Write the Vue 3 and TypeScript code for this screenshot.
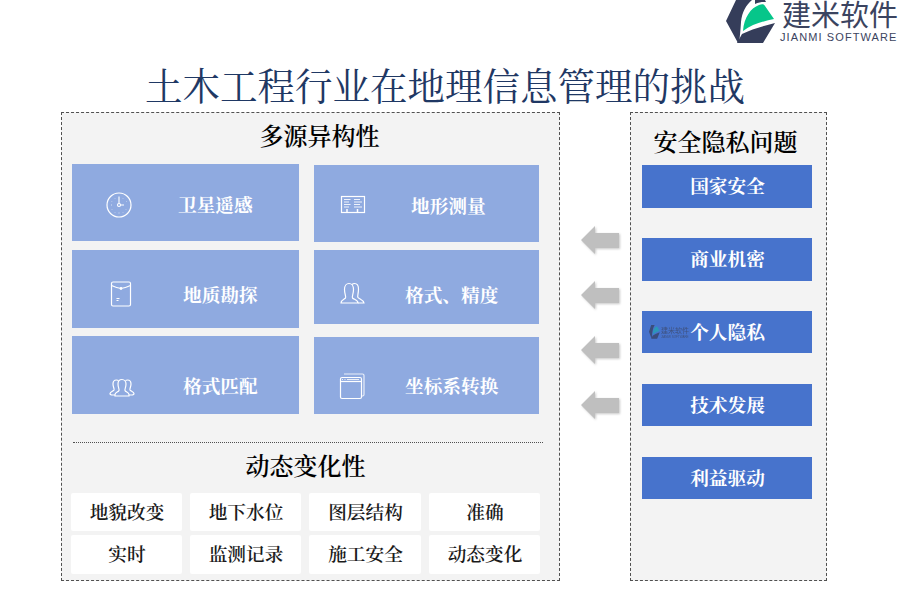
<script setup lang="ts">
const dyn: string[] = ['地貌改变', '地下水位', '图层结构', '准确', '实时', '监测记录', '施工安全', '动态变化']
const risks: string[] = ['国家安全', '商业机密', '个人隐私', '技术发展', '利益驱动']
const arrows: number[] = [1, 2, 3, 4]
</script>

<template>
  <div class="page">
    <header class="head">
      <div class="logo">
        <svg class="mark" width="50" height="44" viewBox="0 0 50 44">
          <path d="M10 0H26C20 5 16 12 15 22C14.500 30 14 36 13 43H12L0 21Z" fill="#353d5a" />
          <path d="M17 31C18 17 25 8 33 5C36 4 38 4 39 6L48 19C38 21 26 24 17 31Z" fill="#06c68a" />
          <path d="M49 23L37 43H11L16 34C26 29 38 26 49 23Z" fill="#353d5a" />
          <path d="M29 0H39L40 2C36 2 33 2 29 4Z" fill="#353d5a" />
        </svg>
        <div class="logo-text">
          <div class="logo-cn">建米软件</div>
          <div class="logo-en">JIANMI SOFTWARE</div>
        </div>
      </div>
    </header>

    <h1 class="title">土木工程行业在地理信息管理的挑战</h1>

    <main class="main">
      <section class="left">
        <h2 class="h-left h-first">多源异构性</h2>
        <div class="cards">
          <div class="col col-a">
            <div class="card c1">
              <svg class="ic" width="30" height="30" viewBox="0 0 30 30" fill="none" stroke="#fff">
                <circle cx="15" cy="15" r="12" stroke-width="1.200" />
                <path d="M15 13.500V6.500M16.500 15H20" stroke-width="1.100" />
                <circle cx="15" cy="15" r="1.500" stroke-width="1.100" />
                <path d="M15 22.500V23.500M7 15H8M22.500 11V11.500M7.800 11V11.500M22 19V19.500M8 19V19.500M11 8V8.500M19 8V8.500M11 22V22.500M19 22V22.500" stroke-width=".8" opacity=".8" />
              </svg>
              <span>卫星遥感</span>
            </div>
            <div class="card c3">
              <svg class="ic" width="30" height="30" viewBox="0 0 30 30" fill="none" stroke="#fff" stroke-width="1.200">
                <rect x="5.500" y="3" width="19" height="24" rx="1.500" />
                <path d="M5.500 6.500C9 8 12 9 15 9.500C18 9 21 8 24.500 6.500" />
                <circle cx="15" cy="9.500" r=".8" />
                <path d="M10.500 19.500H13.500M10.500 21.500H12.500" />
              </svg>
              <span>地质勘探</span>
            </div>
            <div class="card c5">
              <svg class="ic" width="30" height="30" viewBox="0 0 30 30" fill="none" stroke="#fff" stroke-width="1.200">
                <path d="M8 23H22V21.500C22 19.500 18.500 19 18 17.500C17.500 16.500 19 14.500 19 11C19 8.500 17.500 6.500 15 6.500C12.500 6.500 11 8.500 11 11C11 14.500 12.500 16.500 12 17.500C11.500 19 8 19.500 8 21.500Z" />
                <path d="M11.500 7.500C10.800 7 10 7 9.500 7C7.500 7 6 8.500 6 11C6 14 7.500 15.500 7 17C6.500 18 3 19 3 20.500C3 21.500 4 22 5.500 22H8" />
                <path d="M18.500 7.500C19.200 7 20 7 20.500 7C22.500 7 24 8.500 24 11C24 14 22.500 15.500 23 17C23.500 18 27 19 27 20.500C27 21.500 26 22 24.500 22H22" />
              </svg>
              <span>格式匹配</span>
            </div>
          </div>
          <div class="col col-b">
            <div class="card c2">
              <svg class="ic" width="30" height="30" viewBox="0 0 30 30" fill="none" stroke="#fff" stroke-width="1.100">
                <rect x="3.500" y="6.500" width="23" height="16" stroke-width="1.200" />
                <path d="M6 9.500H12.500M6 12H11M6 14.500H12.500M6 17H11M16 9.500H22M16 12H24M16 14.500H22M16 17H24" stroke-opacity=".85" />
                <path d="M9 19V22M19.500 19V22" stroke-width="1.500" />
              </svg>
              <span>地形测量</span>
            </div>
            <div class="card c4">
              <svg class="ic" width="30" height="30" viewBox="0 0 30 30" fill="none" stroke="#fff" stroke-width="1.200">
                <path d="M4 25H21C21 22 17 21.500 15.500 20C14.500 19 16.500 16.500 16.500 11.500C16.500 8 14.500 5.500 12 5.500C9.500 5.500 7.500 8 7.500 11.500C7.500 16.500 9.500 19 8.500 20C7 21.500 4 22 4 25Z" />
                <path d="M15 6.500C15.800 5.800 16.500 5.500 17.500 5.500C20 5.500 21.500 8 21.500 11C21.500 16 20 18 21 19.500C22 21 26.500 22 27 25H21" />
              </svg>
              <span>格式、精度</span>
            </div>
            <div class="card c6">
              <svg class="ic" width="30" height="30" viewBox="0 0 30 30" fill="none" stroke="#fff" stroke-width="1.200">
                <rect x="3.500" y="6.500" width="21" height="21" rx="1.500" />
                <path d="M3.500 10.500H24.500" />
                <path d="M7 3H25.500C26.500 3 27 3.500 27 4.500V23.500C27 24.500 26.500 25 25.500 25H24.500" stroke-opacity=".8" />
                <path d="M5 8.500H6M7.500 8.500H8.500M10 8.500H22" stroke-opacity=".8" />
              </svg>
              <span>坐标系转换</span>
            </div>
          </div>
        </div>
        <div class="dots"></div>
        <h2 class="h-left h-second">动态变化性</h2>
        <div class="tags">
          <div v-for="d in dyn" :key="d" class="tag">{{ d }}</div>
        </div>
      </section>

      <div class="arrows">
        <svg v-for="a in arrows" :key="a" class="arrow" width="42" height="32" viewBox="0 0 42 32">
          <path d="M1 15L15 1V8H39V23H15V29Z" fill="#bfbfbf" />
        </svg>
      </div>

      <aside class="right">
        <h2 class="h-right">安全隐私问题</h2>
        <div v-for="r in risks" :key="r" class="risk">
          <div v-if="r === '个人隐私'" class="wm">
            <svg width="11" height="14" viewBox="0 0 50 44" preserveAspectRatio="none">
              <path d="M10 0H26C18 8 15 20 13 43H12L0 21Z" fill="#353d5a" />
              <path d="M17 31C18 17 25 8 33 5L39 6L48 19C38 21 26 24 17 31Z" fill="#20a8b0" />
              <path d="M49 23L37 43H11L16 34C26 29 38 26 49 23Z" fill="#353d5a" />
            </svg>
            <div class="wm-text">
              <div class="wm-cn">建米软件</div>
              <div class="wm-en">JIANMI SOFTWARE</div>
            </div>
          </div>
          {{ r }}
        </div>
      </aside>
    </main>
  </div>
</template>

<style>
html, body { margin: 0; background: #fff; }
</style>

<style scoped>
.page {
  width: 900px;
  height: 600px;
  overflow: hidden;
  display: flex;
  flex-direction: column;
  font-family: "Noto Serif CJK SC", "Liberation Serif", "Noto Sans CJK SC", serif;
  color: #000;
}
.head {
  height: 60px;
  flex: none;
  display: flex;
  justify-content: flex-end;
}
.logo {
  display: flex;
  align-items: flex-start;
  height: 44px;
}
.mark { margin-right: 4px; }
.logo-text { width: 120px; }
.logo-cn {
  font-family: "Liberation Sans", "Noto Sans CJK SC", sans-serif;
  font-size: 29px;
  line-height: 28px;
  padding: 2px 0 0 2px;
  color: #3b4460;
}
.logo-en {
  font-family: "Liberation Sans", sans-serif;
  font-size: 11px;
  line-height: 13px;
  margin-top: 1px;
  letter-spacing: 1.100px;
  color: #3b4460;
  white-space: nowrap;
}
.title {
  margin: 0;
  height: 52px;
  flex: none;
  padding-right: 10px;
  text-align: center;
  font-size: 37.500px;
  line-height: 48px;
  font-weight: 400;
  color: #1f3864;
  white-space: nowrap;
}
.main {
  display: flex;
  padding-left: 61px;
  height: 469px;
}
.left {
  box-sizing: border-box;
  width: 499px;
  height: 469px;
  border: 1px dashed #505050;
  background: #f3f3f3;
}
.h-left {
  margin: 0;
  height: 48px;
  font-size: 24px;
  line-height: 44px;
  font-weight: 600;
  text-align: center;
}
.h-first { margin-bottom: 3px; padding-left: 18px; }
.h-second { padding-right: 10px; }
.cards {
  display: flex;
  gap: 15px;
  margin-left: 10px;
}
.col { display: flex; flex-direction: column; }
.col-a { width: 227px; gap: 9px; }
.col-b { width: 225px; margin-top: 1px; gap: 8px; }
.card {
  display: flex;
  align-items: center;
  background: #8faae0;
  color: #fff;
  font-size: 18.670px;
  font-weight: 700;
  white-space: nowrap;
}
.card span { display: block; }
.c1 { height: 77px; }
.c1 .ic { margin-left: 32px; margin-top: 5px; }
.c1 span { margin-left: 44px; margin-top: 3px; }
.c2 { height: 77px; }
.c2 .ic { margin-left: 24px; margin-top: 3px; }
.c2 span { margin-left: 43px; margin-top: 3px; }
.c3 { height: 78px; }
.c3 .ic { margin-left: 34px; margin-top: 9px; }
.c3 span { margin-left: 47px; margin-top: 10px; }
.c4 { height: 74px; }
.c4 .ic { margin-left: 23px; margin-top: 12px; }
.c4 span { margin-left: 38px; margin-top: 14px; }
.c5 { height: 78px; margin-top: -1px; }
.c5 .ic { margin-left: 35px; margin-top: 26px; }
.c5 span { margin-left: 46px; margin-top: 20px; }
.c6 { height: 77px; margin-top: 5px; }
.c6 .ic { margin-left: 23px; margin-top: 21px; }
.c6 span { margin-left: 38px; margin-top: 19px; }
.dots {
  margin: 28px 0 0 11px;
  width: 470px;
  border-top: 1px dotted #505050;
}
.tags {
  display: grid;
  grid-template-columns: 111px 111px 112px 111px;
  grid-template-rows: 38px 39px;
  column-gap: 8px;
  row-gap: 4px;
  margin: 2px 0 0 9px;
}
.tag {
  display: flex;
  align-items: center;
  justify-content: center;
  padding: 0 0 3px 1px;
  box-sizing: border-box;
  background: #fff;
  border-radius: 2px;
  font-size: 18.670px;
  font-weight: 600;
  color: #1a1a1a;
}
.arrows {
  width: 70px;
  flex: none;
  display: flex;
  flex-direction: column;
  gap: 23px;
  padding: 113px 0 0 20px;
  box-sizing: border-box;
}
.arrow {
  display: block;
  filter: drop-shadow(1px 1px 1px rgba(0, 0, 0, .22));
}
.right {
  box-sizing: border-box;
  width: 197px;
  height: 469px;
  border: 1px dashed #505050;
  background: #f3f3f3;
  padding: 8px 0 0 11px;
}
.h-right {
  margin: 0 0 2px;
  height: 42px;
  line-height: 40px;
  width: 167px;
  font-size: 24px;
  font-weight: 600;
  text-align: center;
  white-space: nowrap;
}
.risk {
  position: relative;
  box-sizing: border-box;
  width: 170px;
  height: 43px;
  margin-bottom: 30px;
  padding: 0 0 4px 1px;
  display: flex;
  align-items: center;
  justify-content: center;
  background: #4773cc;
  color: #fff;
  font-size: 18.670px;
  font-weight: 700;
}
.risk:nth-of-type(3), .risk:nth-of-type(4) { height: 42px; margin-bottom: 31px; padding-bottom: 3px; }
.risk:nth-of-type(5) { height: 42px; padding-bottom: 3px; }
.wm {
  position: absolute;
  left: 7px;
  top: 14px;
  display: flex;
  align-items: center;
  gap: 1px;
  opacity: .7;
}
.wm-text { width: 28px; overflow: hidden; }
.wm-cn {
  font-family: "Noto Sans CJK SC", sans-serif;
  font-size: 7px;
  line-height: 9px;
  font-weight: 400;
  color: #3b4460;
}
.wm-en {
  font-family: "Liberation Sans", sans-serif;
  font-size: 3px;
  line-height: 4px;
  font-weight: 400;
  color: #3b4460;
  white-space: nowrap;
}
</style>
